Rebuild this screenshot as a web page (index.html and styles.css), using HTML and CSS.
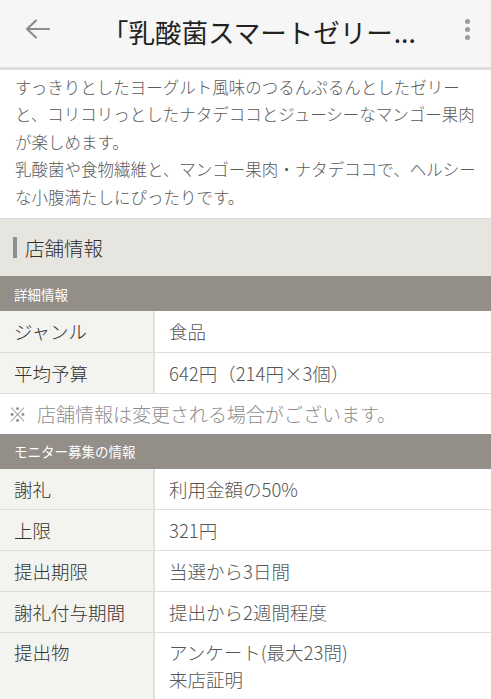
FILE: index.html
```html
<!DOCTYPE html>
<html lang="ja">
<head>
    <meta charset="UTF-8">
    <meta name="viewport" content="width=device-width, initial-scale=1.0">
    <title>店舗情報</title>
    <link rel="stylesheet" href="styles.css">
</head>
<body>
    <!-- Top bar -->
    <header class="topbar">
        <button class="back-button" aria-label="戻る">
            <svg width="26" height="22" viewBox="0 0 26 22">
                <path d="M2 11 H24 M2 11 L11 2.5 M2 11 L11 19.5" fill="none" stroke="#8c8c8c" stroke-width="2.2" stroke-linecap="round"/>
            </svg>
        </button>
        <h1 class="title">「乳酸菌スマートゼリー<span class="dots">...</span></h1>
        <button class="menu-button" aria-label="メニュー">
            <span></span><span></span><span></span>
        </button>
    </header>

    <!-- Description -->
    <p class="description">
        すっきりとしたヨーグルト風味のつるんぷるんとしたゼリー<br>
        と、コリコリっとしたナタデココとジューシーなマンゴー果肉<br>
        が楽しめます。<br>
        乳酸菌や食物繊維と、マンゴー果肉・ナタデココで、ヘルシー<br>
        な小腹満たしにぴったりです。
    </p>

    <!-- Shop info -->
    <section class="info">
        <h2 class="section-title">店舗情報</h2>

        <div class="band">詳細情報</div>
        <table class="info-table">
            <tr>
                <th>ジャンル</th>
                <td>食品</td>
            </tr>
            <tr>
                <th>平均予算</th>
                <td>642円（214円×3個）</td>
            </tr>
        </table>
        <p class="note"><span class="mark">※</span>店舗情報は変更される場合がございます。</p>

        <div class="band">モニター募集の情報</div>
        <table class="info-table">
            <tr>
                <th>謝礼</th>
                <td>利用金額の50%</td>
            </tr>
            <tr>
                <th>上限</th>
                <td>321円</td>
            </tr>
            <tr>
                <th>提出期限</th>
                <td>当選から3日間</td>
            </tr>
            <tr>
                <th>謝礼付与期間</th>
                <td>提出から2週間程度</td>
            </tr>
            <tr class="tall">
                <th>提出物</th>
                <td>アンケート(最大23問)<br>来店証明</td>
            </tr>
        </table>
    </section>
</body>
</html>
```

FILE: styles.css
```css
/* Basic Reset */
* {
    margin: 0;
    padding: 0;
    box-sizing: border-box;
}

body {
    background-color: #ffffff;
    font-family: "Noto Sans CJK JP", "Noto Sans", sans-serif;
    font-weight: 300;
    color: #555555;
    width: 491px;
    overflow: hidden;
}

/* Top bar */
.topbar {
    height: 70px;
    display: flex;
    align-items: center;
    background-color: #f6f6f6;
    border-bottom: 3px solid #dedede;
    padding-bottom: 5px;
}

.back-button {
    width: 26px;
    height: 22px;
    margin-left: 25px;
    margin-bottom: 4px;
    border: none;
    background: none;
    display: flex;
}

.title {
    flex: 1;
    margin-left: 51px;
    font-size: 26.5px;
    font-weight: 400;
    color: #222222;
    white-space: nowrap;
}

.title .dots {
    margin-left: 1px;
}

.menu-button {
    width: 10px;
    margin-right: 19px;
    margin-bottom: 4px;
    border: none;
    background: none;
    display: flex;
    flex-direction: column;
    align-items: center;
    gap: 3px;
}

.menu-button span {
    width: 5px;
    height: 5px;
    border-radius: 50%;
    background-color: #9a9a9a;
}

/* Description */
.description {
    padding: 4px 8px 7px 15px;
    font-size: 16.5px;
    line-height: 27.4px;
    color: #5a5a5a;
    border-bottom: 1px solid #d8d8d8;
}

/* Section heading */
.section-title {
    display: flex;
    align-items: center;
    height: 57px;
    padding-left: 13px;
    background-color: #e6e5e0;
    font-size: 19.5px;
    font-weight: 300;
    color: #2e2e2e;
}

.section-title::before {
    content: "";
    width: 4px;
    height: 21px;
    margin-right: 8px;
    background-color: #8f8f8f;
}

/* Grey band */
.band {
    height: 35px;
    display: flex;
    align-items: center;
    padding-left: 14px;
    background-color: #938e88;
    color: #ffffff;
    font-size: 13.5px;
    font-weight: 400;
}

/* Tables */
.info-table {
    width: 100%;
    border-collapse: collapse;
}

.info-table th,
.info-table td {
    height: 41px;
    font-size: 18.5px;
    font-weight: 300;
    text-align: left;
    border-bottom: 1px solid #dddddd;
    vertical-align: middle;
}

.info-table th {
    width: 154px;
    padding-left: 14px;
    background-color: #f3f3ef;
    color: #333333;
    border-right: 2px solid #e2e2e2;
}

.info-table td {
    padding-left: 14px;
    color: #555555;
}

.info-table .tall th,
.info-table .tall td {
    height: 70px;
    vertical-align: top;
    padding-top: 6px;
    line-height: 27px;
}

/* Note */
.note {
    height: 40px;
    display: flex;
    align-items: center;
    padding-left: 8px;
    font-size: 19px;
    color: #8c8c8c;
}

.note .mark {
    margin-right: 10px;
}
```
